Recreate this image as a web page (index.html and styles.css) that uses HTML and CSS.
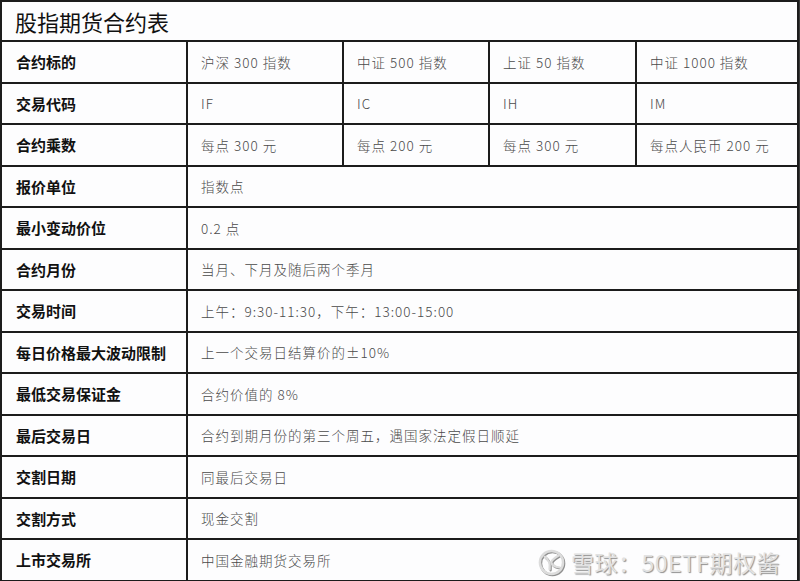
FILE: index.html
```html
<!DOCTYPE html>
<html lang="zh-CN">
<head>
<meta charset="utf-8">
<title>股指期货合约表</title>
<link rel="stylesheet" href="styles.css">
</head>
<body>
<div class="frame">
<table class="sheet">
  <colgroup>
    <col class="c0"><col class="c1"><col class="c2"><col class="c3"><col class="c4">
  </colgroup>
  <tr class="title-row"><td colspan="5" class="title">股指期货合约表</td></tr>
  <tr><th>合约标的</th><td>沪深 300 指数</td><td>中证 500 指数</td><td>上证 50 指数</td><td>中证 1000 指数</td></tr>
  <tr><th>交易代码</th><td>IF</td><td>IC</td><td>IH</td><td>IM</td></tr>
  <tr><th>合约乘数</th><td>每点 300 元</td><td>每点 200 元</td><td>每点 300 元</td><td>每点人民币 200 元</td></tr>
  <tr><th>报价单位</th><td colspan="4">指数点</td></tr>
  <tr><th>最小变动价位</th><td colspan="4">0.2 点</td></tr>
  <tr><th>合约月份</th><td colspan="4">当月、下月及随后两个季月</td></tr>
  <tr><th>交易时间</th><td colspan="4">上午：9:30-11:30，下午：13:00-15:00</td></tr>
  <tr><th>每日价格最大波动限制</th><td colspan="4">上一个交易日结算价的±10%</td></tr>
  <tr><th>最低交易保证金</th><td colspan="4">合约价值的 8%</td></tr>
  <tr><th>最后交易日</th><td colspan="4">合约到期月份的第三个周五，遇国家法定假日顺延</td></tr>
  <tr><th>交割日期</th><td colspan="4">同最后交易日</td></tr>
  <tr><th>交割方式</th><td colspan="4">现金交割</td></tr>
  <tr><th>上市交易所</th><td colspan="4">中国金融期货交易所</td></tr>
</table>
<div class="watermark">
  <svg class="wm-logo" viewBox="0 0 28 28" width="27" height="27" aria-hidden="true">
    <circle cx="14" cy="14" r="12" fill="none" stroke="#dcdcdc" stroke-width="2.6"/>
    <path d="M7 8 C11 11 13 14 12 21" fill="none" stroke="#dcdcdc" stroke-width="2.4" stroke-linecap="round"/>
    <path d="M21 7 C16 10 13 13 14 15 C16 18 19 19 22 19" fill="none" stroke="#dcdcdc" stroke-width="2.4" stroke-linecap="round"/>
  </svg>
  <span class="wm-text">雪球：50ETF期权酱</span>
</div>
</div>
</body>
</html>
```
FILE: styles.css
```css
html, body {
  margin: 0;
  padding: 0;
  background: #ffffff;
}
.frame {
  position: relative;
  width: 800px;
  height: 581px;
  overflow: hidden;
  background: #3a3a3a;
}
.sheet {
  border-collapse: collapse;
  table-layout: fixed;
  width: 797px;
  height: 581px;
  background: #fdfdfe;
  font-family: "Noto Sans CJK SC", "Noto Sans", sans-serif;
}
.c0 { width: 186px; }
.c1 { width: 156px; }
.c2 { width: 146px; }
.c3 { width: 147px; }
.c4 { width: 162px; }
.sheet tr {
  height: 41.5px;
}
.sheet tr.title-row {
  height: 40px;
}
.sheet td, .sheet th {
  border: 2px solid #1c1c1c;
  padding: 0 0 0 13px;
  text-align: left;
  vertical-align: middle;
  white-space: nowrap;
  overflow: hidden;
}
.sheet th {
  font-weight: 700;
  font-size: 15px;
  color: #111111;
  padding-left: 14px;
}
.sheet td {
  font-family: "Noto Sans CJK SC", sans-serif;
  font-weight: 300;
  font-size: 13.5px;
  color: #4a4a4a;
  letter-spacing: 1px;
}
.sheet .title-row td.title {
  font-size: 22px;
  font-weight: 400;
  color: #111111;
  letter-spacing: 0;
  padding-left: 13px;
}
.watermark {
  position: absolute;
  left: 538px;
  top: 545px;
  display: flex;
  align-items: center;
  gap: 6px;
}
.wm-text {
  font-family: "Noto Sans CJK SC", "Noto Sans", sans-serif;
  font-size: 23px;
  color: #e2e2e2;
  text-shadow: 1px 1px 1px #8f8f8f;
  letter-spacing: 0.5px;
}
.wm-logo {
  filter: drop-shadow(1px 1px 0.5px #8f8f8f);
}
```
